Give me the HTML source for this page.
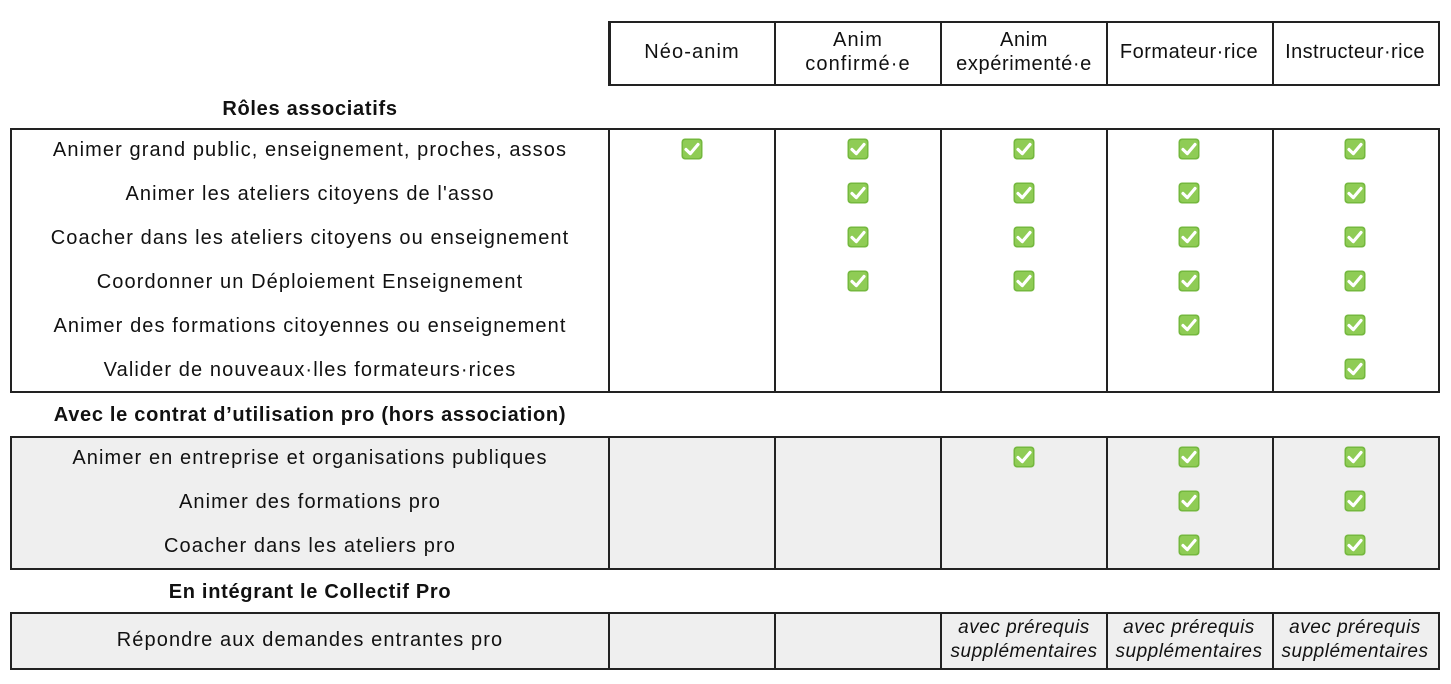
<!DOCTYPE html>
<html><head><meta charset="utf-8"><style>
body{margin:0;width:1451px;height:684px;background:#fff;position:relative;overflow:hidden;font-family:"Liberation Sans",sans-serif;color:#111}
.b{position:absolute;border:2px solid #222;box-sizing:border-box}
.v{position:absolute;width:2px;background:#222}
.t{position:absolute;font-size:20px;letter-spacing:1.1px;white-space:nowrap;transform:translate(-50%,-50%);text-align:center;line-height:24px;margin-top:1px}
.h{font-weight:bold;letter-spacing:0.7px}
.i{font-style:italic;font-size:19px;letter-spacing:0.5px;line-height:24px}
.c{position:absolute;width:22px;height:22px;transform:translate(-50%,-50%)}
</style></head><body>
<div class="b" style="left:609px;top:21px;width:831px;height:65px"></div>
<div class="b" style="left:10px;top:128px;width:1430px;height:265px"></div>
<div class="b" style="left:10px;top:436px;width:1430px;height:134px;background:#efefef"></div>
<div class="b" style="left:10px;top:612px;width:1430px;height:58px;background:#efefef"></div>
<div id="lines"></div>
<div class="t" style="left:692px;top:51px">Néo-anim</div>
<div class="t" style="left:858px;top:51px">Anim<br>confirmé·e</div>
<div class="t" style="left:1024px;top:51px;letter-spacing:0.6px">Anim<br>expérimenté·e</div>
<div class="t" style="left:1189px;top:51px;letter-spacing:0.5px">Formateur·rice</div>
<div class="t" style="left:1355px;top:51px;letter-spacing:0.4px">Instructeur·rice</div>
<div class="t h" style="left:310px;top:108px">Rôles associatifs</div>
<div class="t h" style="left:310px;top:414px">Avec le contrat d’utilisation pro (hors association)</div>
<div class="t h" style="left:310px;top:591px">En intégrant le Collectif Pro</div>
<div class="t" style="left:310px;top:149px">Animer grand public, enseignement, proches, assos</div>
<div class="t" style="left:310px;top:193px">Animer les ateliers citoyens de l'asso</div>
<div class="t" style="left:310px;top:237px">Coacher dans les ateliers citoyens ou enseignement</div>
<div class="t" style="left:310px;top:281px">Coordonner un Déploiement Enseignement</div>
<div class="t" style="left:310px;top:325px">Animer des formations citoyennes ou enseignement</div>
<div class="t" style="left:310px;top:369px">Valider de nouveaux·lles formateurs·rices</div>
<div class="t" style="left:310px;top:457px">Animer en entreprise et organisations publiques</div>
<div class="t" style="left:310px;top:501px">Animer des formations pro</div>
<div class="t" style="left:310px;top:545px">Coacher dans les ateliers pro</div>
<div class="t" style="left:310px;top:639px">Répondre aux demandes entrantes pro</div>
<div class="t i" style="left:1024px;top:639px">avec prérequis<br>supplémentaires</div>
<div class="t i" style="left:1189px;top:639px">avec prérequis<br>supplémentaires</div>
<div class="t i" style="left:1355px;top:639px">avec prérequis<br>supplémentaires</div>
<div id="checks"></div>
<script>
var xs=[609,775,941,1107,1273],L=document.getElementById('lines'),h='';
[[21,86],[128,393],[436,570],[612,670]].forEach(function(r){xs.forEach(function(x){h+='<div class="v" style="left:'+(x-1)+'px;top:'+r[0]+'px;height:'+(r[1]-r[0])+'px"></div>'})});
L.innerHTML=h;
var cx=[692,858,1024,1189,1355];
var rows=[[149,[0,1,2,3,4]],[193,[1,2,3,4]],[237,[1,2,3,4]],[281,[1,2,3,4]],[325,[3,4]],[369,[4]],[457,[2,3,4]],[501,[3,4]],[545,[3,4]]];
var s='<svg viewBox="0 0 22 22" width="22" height="22"><rect x="0.5" y="0.5" width="21" height="21" rx="3.5" fill="#74b83e"/><rect x="2" y="2" width="18" height="18" rx="2.5" fill="#8fcc55"/><path d="M5 11.5 L9.3 15.6 L17 6.5" stroke="#fff" stroke-width="3.2" fill="none" stroke-linecap="round" stroke-linejoin="round"/></svg>';
var c='';rows.forEach(function(r){r[1].forEach(function(k){c+='<div class="c" style="left:'+cx[k]+'px;top:'+r[0]+'px">'+s+'</div>'})});
document.getElementById('checks').innerHTML=c;
</script>
</body></html>
